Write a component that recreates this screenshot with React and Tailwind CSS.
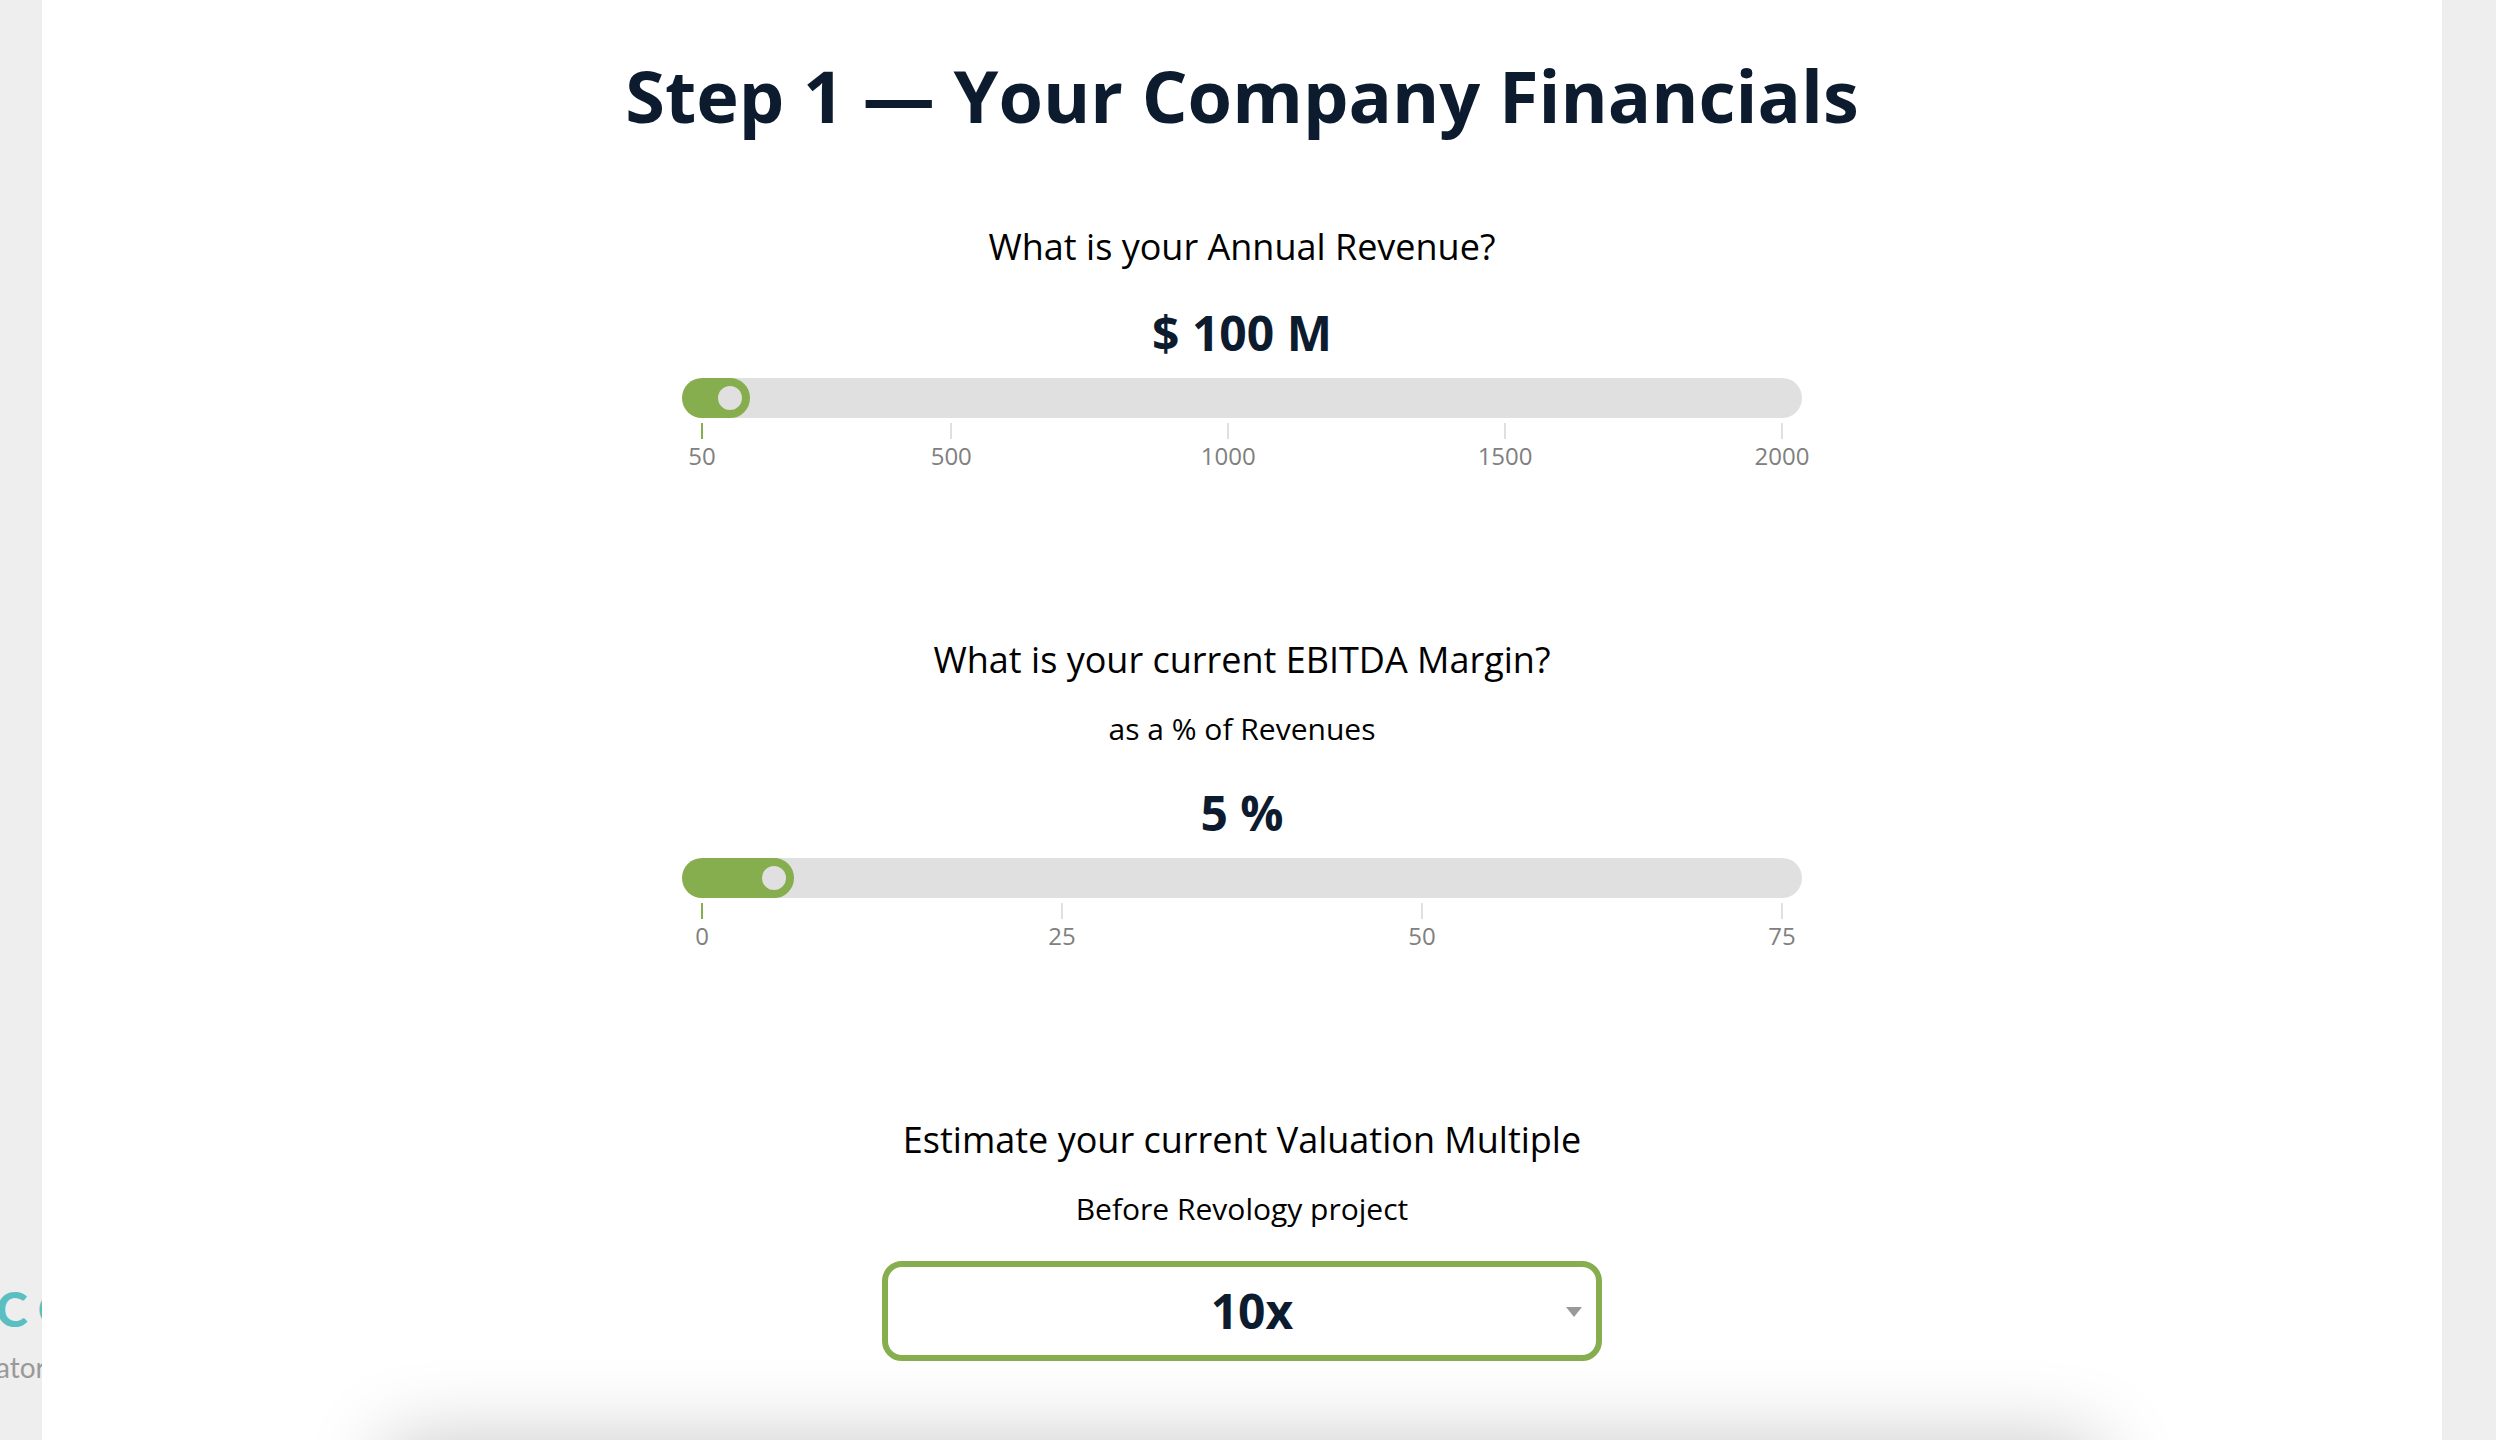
import { useState } from "react";

const ranges = {
  revenue: { min: 50, max: 2000, step: 50, ticks: [50, 500, 1000, 1500, 2000] },
  margin: { min: 0, max: 75, step: 1, ticks: [0, 25, 50, 75] },
};

const multiples = ["5x", "6x", "7x", "8x", "9x", "10x", "11x", "12x", "15x", "20x"];

const RangeSlider = ({ id, range, value, onChange }) => {
  const { min, max, step, ticks } = range;
  const ratio = (value - min) / (max - min);
  // the fill stops under the middle of the 40px thumb
  const stop = `calc(20px + (100% - 40px) * ${ratio})`;

  return (
    <div className="w-full max-w-[1120px]">
      <input
        id={id}
        type="range"
        min={min}
        max={max}
        step={step}
        value={value}
        onChange={(e) => onChange(Number(e.target.value))}
        style={{
          background: `linear-gradient(to right, #86ae4f ${stop}, #e0e0e0 ${stop})`,
        }}
        className="block h-10 w-full cursor-pointer appearance-none rounded-full outline-none [&::-webkit-slider-thumb]:h-10 [&::-webkit-slider-thumb]:w-10 [&::-webkit-slider-thumb]:appearance-none [&::-webkit-slider-thumb]:rounded-full [&::-webkit-slider-thumb]:border-8 [&::-webkit-slider-thumb]:border-[#86ae4f] [&::-webkit-slider-thumb]:bg-[#e0e0e0]"
      />
      <div className="mx-5 mt-[5px] flex">
        {ticks.map((tick, i) => (
          <div
            key={tick}
            className="flex justify-end"
            style={{ flex: `${i === 0 ? 0 : tick - ticks[i - 1]} 1 0px` }}
          >
            <div className="flex w-0 flex-col items-center">
              <span
                className={`h-4 w-0.5 ${tick <= value ? "bg-[#86ae4f]" : "bg-[#e0e0e0]"}`}
              />
              <span className="text-2xl leading-[34px] text-[#808080]">{tick}</span>
            </div>
          </div>
        ))}
      </div>
    </div>
  );
};

const Question = ({ id, title, hint, children }) => (
  <div className="flex w-full flex-col items-center">
    <label htmlFor={id} className="text-center text-4xl leading-12">
      {title}
    </label>
    {hint && <p className="mt-[23px] text-[30px] leading-11">{hint}</p>}
    <div className="mt-[30px] flex w-full flex-col items-center">{children}</div>
  </div>
);

const Value = ({ children }) => (
  <p className="mb-[13px] text-5xl leading-16 font-bold text-[#0d1b2f]">{children}</p>
);

const App = () => {
  const [revenue, setRevenue] = useState(100);
  const [margin, setMargin] = useState(5);
  const [multiple, setMultiple] = useState("10x");

  return (
    <div className="flex h-screen overflow-hidden bg-[#eeeeee] font-['Open_Sans',sans-serif] text-black">
      {/* Page behind the panel */}
      <aside className="w-[42px] shrink-0 overflow-hidden pt-[1279px] font-['Lato',sans-serif]">
        <div className="-ml-1 flex w-max gap-2.5 text-5xl leading-[60px] font-black text-[#5bbfc2]">
          <span>C</span>
          <span>O</span>
        </div>
        <p className="-ml-1 mt-2.5 text-[28px] leading-9 text-[#999999]">ator</p>
      </aside>

      <main className="flex min-w-0 flex-1 flex-col items-center bg-white px-6 pt-[50px]">
        <h1 className="text-center text-7xl leading-[90px] font-bold text-[#0d1b2f]">
          Step 1 — Your Company Financials
        </h1>

        <form className="mt-[83px] flex w-full flex-col items-center gap-[163px]">
          <Question id="revenue" title="What is your Annual Revenue?">
            <Value>$ {revenue} M</Value>
            <RangeSlider
              id="revenue"
              range={ranges.revenue}
              value={revenue}
              onChange={setRevenue}
            />
          </Question>

          <Question
            id="margin"
            title="What is your current EBITDA Margin?"
            hint="as a % of Revenues"
          >
            <Value>{margin} %</Value>
            <RangeSlider
              id="margin"
              range={ranges.margin}
              value={margin}
              onChange={setMargin}
            />
          </Question>

          <Question
            id="multiple"
            title="Estimate your current Valuation Multiple"
            hint="Before Revology project"
          >
            <div className="relative w-full max-w-[720px]">
              <select
                id="multiple"
                value={multiple}
                onChange={(e) => setMultiple(e.target.value)}
                className="block h-[100px] w-full cursor-pointer appearance-none rounded-[20px] border-6 border-[#86ae4f] bg-white pl-5 text-center text-5xl font-bold text-[#0d1b2f] outline-none"
              >
                {multiples.map((item) => (
                  <option key={item}>{item}</option>
                ))}
              </select>
              <svg
                viewBox="0 0 16 10"
                className="pointer-events-none absolute top-[46px] right-5 h-2.5 w-4 fill-[#999999]"
              >
                <path d="M0 0h16L8 10z" />
              </svg>
            </div>
          </Question>
        </form>
      </main>

      <aside className="w-[54px] shrink-0" />

      {/* Results bar waiting below the fold */}
      <div className="fixed right-[396px] left-[384px] top-full h-40 rounded-[20px] bg-white shadow-[0_0_80px_rgba(0,0,0,0.22)]" />
    </div>
  );
};

export default App;
